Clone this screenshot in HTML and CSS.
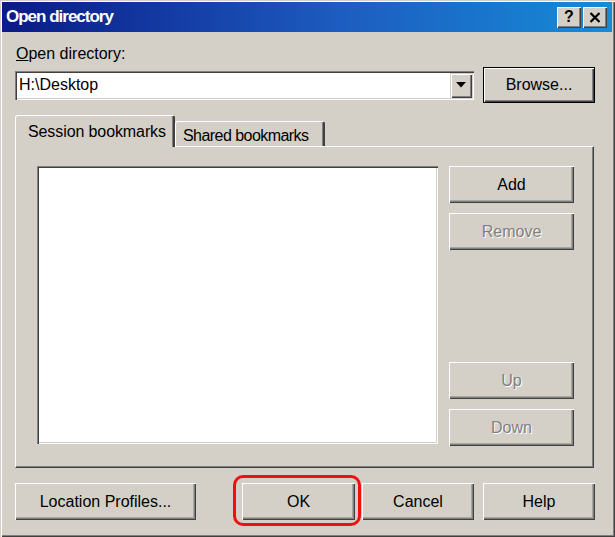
FILE: index.html
```html
<!DOCTYPE html>
<html>
<head>
<meta charset="utf-8">
<link rel="stylesheet" href="styles.css">
</head>
<body>
<div class="window">
  <div class="titlebar">
    <span class="title">Open directory</span>
    <div class="tbtns">
      <span class="tbtn help">?</span>
      <span class="tbtn close"><svg width="12" height="11" viewBox="0 0 12 11"><path d="M1.5 1 L10.5 10 M10.5 1 L1.5 10" stroke="#000" stroke-width="2.2" fill="none"/></svg></span>
    </div>
  </div>
  <div class="content">
    <div class="label"><u>O</u>pen directory:</div>
    <div class="row">
      <div class="combo">
        <span class="combo-text">H:\Desktop</span>
        <span class="dd"><svg width="10" height="6" viewBox="0 0 10 6"><path d="M0 0 H10 L5 5.5 Z" fill="#000"/></svg></span>
      </div>
      <button class="btn default browse">Browse...</button>
    </div>
    <div class="tabs">
      <div class="tab active">Session bookmarks</div>
      <div class="tab">Shared bookmarks</div>
    </div>
    <div class="panel">
      <div class="list"></div>
      <div class="side">
        <button class="btn side-btn">Add</button>
        <button class="btn side-btn disabled">Remove</button>
        <div class="spacer"></div>
        <button class="btn side-btn disabled">Up</button>
        <button class="btn side-btn disabled">Down</button>
      </div>
    </div>
    <div class="bottom">
      <button class="btn lp">Location Profiles...</button>
      <div class="ok-wrap"><button class="btn ok">OK</button></div>
      <button class="btn cancel">Cancel</button>
      <button class="btn helpb">Help</button>
    </div>
  </div>
</div>
</body>
</html>
```

FILE: styles.css
```css
* { box-sizing: border-box; }
html, body { margin: 0; padding: 0; }
body { width: 615px; height: 537px; overflow: hidden; background: #d4d0c8; font-family: "Liberation Sans", Arial, sans-serif; font-size: 16px; color: #000; }

.window {
  width: 615px; height: 537px;
  background: #d4d0c8;
  padding: 2px 3px 3px 2px;
  box-shadow: inset 1px 1px 0 #d4d0c8, inset 2px 2px 0 #ffffff, inset -1px -1px 0 #404040, inset -2px -2px 0 #808080;
}

.titlebar {
  height: 30px;
  background: linear-gradient(to right, #0a1a86 0%, #1d5cc0 55%, #168bd6 100%);
  display: flex; align-items: center; justify-content: space-between;
  padding: 0 5px 0 4px;
}
.title { color: #fff; font-weight: bold; font-size: 17px; letter-spacing: -1px; line-height: 20px; }
.tbtns { display: flex; gap: 2px; }
.tbtn {
  width: 24px; height: 21px; background: #d4d0c8;
  display: flex; align-items: center; justify-content: center;
  font-weight: bold; font-size: 16px;
  box-shadow: inset 1px 1px 0 #ffffff, inset -1px -1px 0 #404040, inset -2px -2px 0 #808080;
}

.content { padding: 0 0 0 13px; }
.label { margin-top: 12px; line-height: 19px; padding-left: 1px; }
.row { display: flex; align-items: center; margin-top: 4px; height: 36px; }
.combo {
  width: 459px; height: 29px; background: #fff;
  display: flex; align-items: center; justify-content: space-between;
  padding: 2px 2px 2px 3px;
  box-shadow: inset 1px 1px 0 #808080, inset 2px 2px 0 #404040, inset -1px -1px 0 #ffffff, inset -2px -2px 0 #d4d0c8;
}
.combo-text { padding-left: 1px; }
.dd {
  width: 22px; height: 25px; background: #d4d0c8;
  display: flex; align-items: center; justify-content: center;
  box-shadow: inset 1px 1px 0 #d4d0c8, inset 2px 2px 0 #ffffff, inset -1px -1px 0 #404040, inset -2px -2px 0 #808080;
}

.btn {
  font: inherit; color: #000; background: #d4d0c8; border: 0; padding: 0; margin: 0;
  height: 37px;
  box-shadow: inset 1px 1px 0 #ffffff, inset -1px -1px 0 #404040, inset -2px -2px 0 #808080, inset -3px -3px 0 #a8a49c;
}
.btn.default {
  box-shadow: inset 0 0 0 1px #000, inset 2px 2px 0 #ffffff, inset -2px -2px 0 #404040, inset -3px -3px 0 #808080;
}
.browse { width: 112px; height: 36px; margin-left: 9px; }
.btn.disabled { color: #808080; text-shadow: 1px 1px 0 #ffffff; }

.tabs { display: flex; align-items: flex-end; margin-top: 12px; height: 31px; position: relative; z-index: 1; }
.tab {
  white-space: nowrap;
  height: 25px; line-height: 22px;
  border-top: 1px solid #fff; border-left: 1px solid #fff;
  border-right: 2px solid #404040;
  border-radius: 3px 3px 0 0;
  background: #d4d0c8;
  box-shadow: inset -1px 0 0 #808080;
}
.tab.active {
  height: 32px; width: 160px; padding: 5px 0 0 12px; line-height: 22px;
  margin-bottom: -1px; letter-spacing: -0.1px;
}
.tab:not(.active) { width: 150px; padding: 3px 0 0 7px; letter-spacing: -0.55px; }

.panel {
  width: 579px; height: 322px;
  display: flex; padding: 19px 0 0 21px;
  border-top: 1px solid #fff; border-left: 1px solid #fff;
  border-right: 1px solid #404040; border-bottom: 1px solid #404040;
  box-shadow: inset -1px -1px 0 #808080;
}
.list {
  width: 401px; height: 278px; background: #fff;
  box-shadow: inset 1px 1px 0 #808080, inset 2px 2px 0 #404040, inset -1px -1px 0 #ffffff, inset -2px -2px 0 #d4d0c8;
}
.side { display: flex; flex-direction: column; margin-left: 11px; width: 125px; height: 280px; }
.side-btn { width: 125px; height: 37px; margin-bottom: 10px; }
.side .spacer { flex: 1; }
.side-btn:last-child { margin-bottom: 0; }

.bottom { display: flex; margin-top: 15px; }
.lp { width: 181px; }
.ok-wrap { position: relative; margin-left: 46px; }
.ok-wrap::after {
  content: ""; position: absolute;
  top: -8px; left: -9px; right: -6px; bottom: -6px;
  border: 3px solid #f00f0f; border-radius: 10px;
}
.ok { width: 113px; }
.cancel { width: 112px; margin-left: 7px; }
.helpb { width: 112px; margin-left: 9px; }
```
